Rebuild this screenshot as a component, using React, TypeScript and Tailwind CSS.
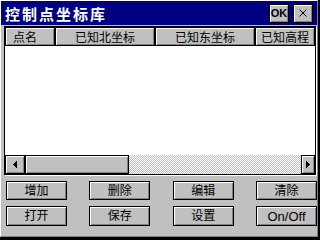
import React from "react";

const raised =
  "bg-[#c0c0c0] border border-black shadow-[inset_1px_1px_0_#ffffff,inset_-1px_-1px_0_#808080]";

function Btn({ label }: { label: string }) {
  return (
    <div
      className={`${raised} flex items-center justify-center text-[12px] leading-none text-black font-['Liberation_Sans','Noto_Sans_CJK_SC',sans-serif]`}
    >
      {label}
    </div>
  );
}

export default function App() {
  return (
    <div className="w-[320px] h-[240px] bg-black">
      <div className="w-[318px] h-[237px] bg-[#c0c0c0] border-t border-l border-r border-b border-t-white border-l-white border-r-[#808080] border-b-[#808080] flex flex-col">
        {/* Title bar */}
        <div className="h-[24px] bg-[#000080] flex items-center pl-[4px] pr-[4px]">
          <div className="flex-1 text-white font-bold text-[15px] tracking-[2px] leading-none font-['Noto_Sans_CJK_SC',sans-serif]">
            控制点坐标库
          </div>
          <div
            className={`${raised} w-[20px] h-[19px] flex items-center justify-center text-[11px] font-bold leading-none text-black font-['Liberation_Sans',sans-serif]`}
          >
            OK
          </div>
          <div
            className={`${raised} ml-[4px] w-[20px] h-[19px] flex items-center justify-center`}
          >
            <svg width="8" height="8" viewBox="0 0 8 8">
              <path d="M0.5 0.5 L7.5 7.5 M7.5 0.5 L0.5 7.5" stroke="black" strokeWidth="1" />
            </svg>
          </div>
        </div>

        {/* List */}
        <div className="mt-[1px] ml-[3px] w-[312px] h-[149px] border border-black bg-white shadow-[1px_1px_0_#ffffff] flex flex-col overflow-hidden">
          <div className="h-[19px] flex shrink-0 text-[12px] leading-none text-black font-['Noto_Sans_CJK_SC',sans-serif]">
            <div className={`${raised} w-[50px] flex items-center pl-[7px]`}>点名</div>
            <div className={`${raised} w-[100px] flex items-center justify-center`}>已知北坐标</div>
            <div className={`${raised} w-[100px] flex items-center justify-center`}>已知东坐标</div>
            <div className={`${raised} w-[60px] flex items-center justify-center`}>已知高程</div>
          </div>
          <div className="flex-1 bg-white" />
          <div className="h-[19px] flex shrink-0">
            <div className={`${raised} w-[20px] flex items-center justify-center`}>
              <svg width="4" height="7" viewBox="0 0 4 7" shapeRendering="crispEdges">
                <path d="M3 0h1v7h-1z M2 1h1v5h-1z M1 2h1v3h-1z M0 3h1v1h-1z" fill="black" />
              </svg>
            </div>
            <div className={`${raised} w-[104px]`} />
            <div className="flex-1 bg-[image:repeating-conic-gradient(#c0c0c0_0_25%,#ffffff_0_50%)] bg-[length:2px_2px]" />
            <div className={`${raised} w-[14px] flex items-center justify-center`}>
              <svg width="4" height="7" viewBox="0 0 4 7" shapeRendering="crispEdges">
                <path d="M0 0h1v7h-1z M1 1h1v5h-1z M2 2h1v3h-1z M3 3h1v1h-1z" fill="black" />
              </svg>
            </div>
          </div>
        </div>

        {/* Buttons */}
        <div className="mt-[6px] ml-[5px] w-[311px] grid grid-cols-[61px_61px_61px_61px] grid-rows-[19px_20px] gap-y-[6px] justify-between">
          <Btn label="增加" />
          <Btn label="删除" />
          <Btn label="编辑" />
          <Btn label="清除" />
          <Btn label="打开" />
          <Btn label="保存" />
          <Btn label="设置" />
          <div
            className={`${raised} flex items-center justify-center text-[13px] leading-none text-black font-['Liberation_Sans',sans-serif]`}
          >
            On/Off
          </div>
        </div>
      </div>
    </div>
  );
}
